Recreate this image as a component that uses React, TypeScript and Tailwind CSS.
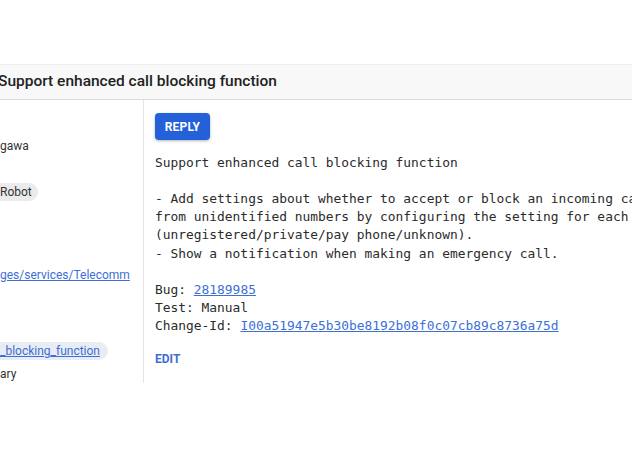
export default function App() {
  const mono = { fontFamily: '"DejaVu Sans Mono", "Liberation Mono", monospace' };
  return (
    <div
      className="w-[632px] h-[449px] bg-white overflow-hidden text-[#202124]"
      style={{ fontFamily: 'Roboto, "Noto Sans", Arial, sans-serif' }}
    >
      <div className="h-[64px]" />

      {/* Change title bar */}
      <div className="h-[36px] bg-[#f8f8f8] border-t border-[#eeeeee] border-b border-b-[#dcdcdc] flex items-center">
        <h1 className="-ml-[2px] text-[15.5px] font-medium text-[#222] whitespace-nowrap">
          Support enhanced call blocking function
        </h1>
      </div>

      <div className="flex h-[283px]">
        {/* Metadata column (cut off at the left edge) */}
        <div className="w-[144px] shrink-0 border-r border-[#e4e4e4] text-[12px] text-[#333] overflow-hidden flex flex-col items-start whitespace-nowrap">
          <div className="mt-[38px] leading-4">gawa</div>
          <div className="mt-[29px] h-[18px] leading-[18px] pr-[6px] rounded-r-full bg-[#ebebeb] -ml-[2px]">
            <span className="pl-[2px]">Robot</span>
          </div>
          <a href="#" className="mt-[66px] leading-4 text-[#3d6fd6] underline">
            ges/services/Telecomm
          </a>
          <div className="mt-[59px] h-[18px] leading-[18px] pr-[8px] rounded-r-full bg-[#e8ecf3]">
            <a href="#" className="text-[#3d6fd6] underline">
              _blocking_function
            </a>
          </div>
          <div className="mt-[6px] leading-4">ary</div>
        </div>

        {/* Commit message */}
        <div className="flex-1 min-w-0 pl-[11px] pt-[13px] overflow-hidden">
          <button className="h-[27px] w-[55px] rounded-[4px] bg-[#2460d8] text-white text-[12px] font-bold tracking-[0.2px] shadow-[0_1px_3px_rgba(0,0,0,0.3)]">
            REPLY
          </button>
          <pre
            className="mt-[13.5px] text-[12.9px] leading-[18.2px] text-[#2b2b2b] whitespace-pre"
            style={mono}
          >
            {'Support enhanced call blocking function\n\n- Add settings about whether to accept or block an incoming call\nfrom unidentified numbers by configuring the setting for each type\n(unregistered/private/pay phone/unknown).\n- Show a notification when making an emergency call.\n\nBug: '}
            <a href="#" className="text-[#3d6fd6] underline">28189985</a>
            {'\nTest: Manual\nChange-Id: '}
            <a href="#" className="text-[#3d6fd6] underline">I00a51947e5b30be8192b08f0c07cb89c8736a75d</a>
          </pre>
          <div className="mt-[15px] text-[12px] leading-4 font-bold text-[#3d6fd6]">EDIT</div>
        </div>
      </div>
    </div>
  );
}
